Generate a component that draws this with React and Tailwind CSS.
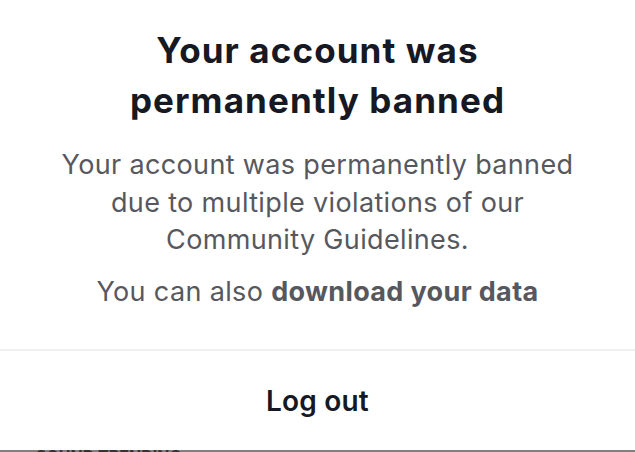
import React from "react";

export default function App() {
  return (
    <div className="w-[635px] h-[452px] bg-white flex flex-col overflow-hidden" style={{ fontFamily: "Inter, 'Noto Sans', sans-serif" }}>
      <div className="flex-1 flex flex-col">
        <h1 className="pt-[25px] text-center text-[35px] leading-[50px] font-bold text-[#161823] tracking-[1.1px]">
          Your account was
          <br />
          permanently banned
        </h1>
        <p className="mt-[21px] text-center text-[27px] leading-[37.5px] text-[#57585e] tracking-[0.35px]">
          Your account was permanently banned
          <br />
          due to multiple violations of our
          <br />
          Community Guidelines.
        </p>
        <p className="mt-[14px] text-center text-[27px] leading-[37.5px] text-[#57585e] tracking-[0.35px]">
          You can also <span className="font-bold">download your data</span>
        </p>
        <div className="mt-auto h-[2px] bg-[#f0f0f1]" />
        <button className="h-[99px] w-full flex items-center justify-center text-[28px] font-semibold text-[#161823] tracking-[0.2px]">
          Log out
        </button>
      </div>
      <div className="h-[2px] bg-[#808080] relative overflow-hidden">
        <span className="absolute left-[36px] top-[-2px] text-[16px] leading-[16px] font-bold text-[#333]">SOUND TRENDING</span>
        <span className="absolute left-[578px] top-[-2px] text-[16px] leading-[16px] font-bold text-[#999]">more</span>
      </div>
    </div>
  );
}
